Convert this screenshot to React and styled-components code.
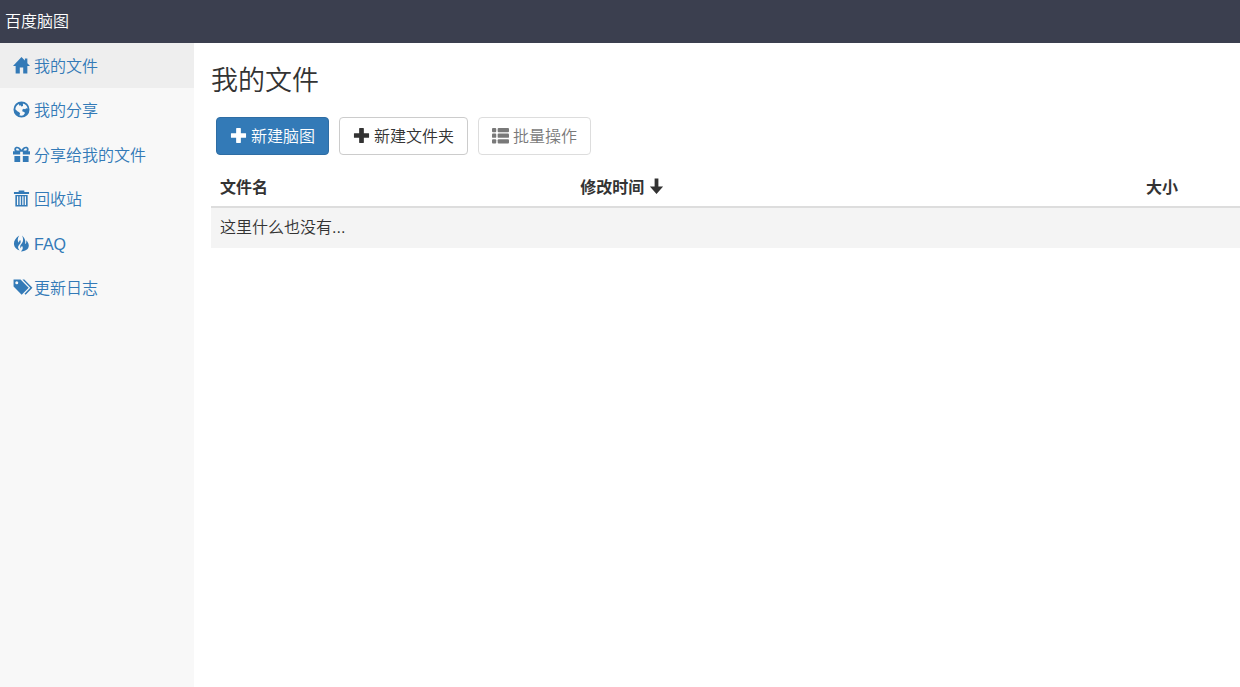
import React from "react";
import styled, { createGlobalStyle } from "styled-components";

const HomeIcon = () => (
  <Icon viewBox="0 0 18 18">
    <path d="M9 0 L0 9.6 H2.8 V17.5 H7.2 V11 H10.8 V17.5 H15.2 V9.6 H18 L15.2 6.6 V1.6 H12.6 V3.8 Z" />
  </Icon>
);

const GlobeIcon = () => (
  <Icon viewBox="0 0 18 18">
    <path
      fillRule="evenodd"
      d="M9 .5 A8.5 8.5 0 1 0 9 17.5 A8.5 8.5 0 1 0 9 .5 Z M10.5 2.6 A6.6 6.6 0 0 1 15.5 8 L14 7.6 12.8 8.8 11.4 8.2 9.8 9.2 10 11 12 11.6 12.6 13 11 15.2 A6.6 6.6 0 0 1 6.6 15.1 L7.6 13.5 6.6 11.8 4.6 10.8 2.5 8.8 A6.6 6.6 0 0 1 6.2 3.1 L6.8 5 8.2 4.4 8.6 5.8 10.6 5.4 Z"
    />
  </Icon>
);

const GiftIcon = () => (
  <Icon viewBox="0 0 18 18">
    <path
      fillRule="evenodd"
      d="M0 5.6 H2 C.6 3.2 1.8 .8 4.2 .8 C6.3 .8 7.6 2 9 4 C10.4 2 11.7 .8 13.8 .8 C16.2 .8 17.4 3.2 16 5.6 H18 V9 H10.4 V6.2 H7.6 V9 H0 Z M3.9 4.8 H7 C6.1 3.4 5.2 2.5 4.3 2.5 C3.1 2.5 3 3.8 3.9 4.8 Z M11 4.8 H14.1 C15 3.8 14.9 2.5 13.7 2.5 C12.8 2.5 11.9 3.4 11 4.8 Z"
    />
    <path d="M1.5 10.6 H7.6 V17 H1.5 Z M10.4 10.6 H16.5 V17 H10.4 Z" />
  </Icon>
);

const TrashIcon = () => (
  <Icon viewBox="0 0 18 18">
    <path
      fillRule="evenodd"
      d="M6 2 V.4 H12 V2 H17 V4.2 H1 V2 Z M2.5 5.2 H15.5 V17.5 H2.5 Z M4.2 6.5 V16 H5.5 V6.5 Z M7 6.5 V16 H8.3 V6.5 Z M9.8 6.5 V16 H11.1 V6.5 Z M12.5 6.5 V16 H13.8 V6.5 Z"
    />
  </Icon>
);

const FireIcon = () => (
  <Icon viewBox="0 0 18 18">
    <path d="M6.6 .5 C3 3 .8 6 1 9.5 C1.2 13 3.6 15 7 16.5 C4.8 13.7 5 12 6.6 10.4 C8.4 8.6 8.6 7.3 7.6 5.4 C6.8 6.3 6.2 7 6.3 8.3 C4.3 6.2 4.8 3.4 6.6 .5 Z" />
    <path d="M9.6 .5 C13 4 13.6 6.6 12.6 9.9 C14 9 14.4 7.6 14 5.6 C16.8 8.6 17.8 12 15.4 14.8 C13.6 16.6 11.2 17.4 8.4 17.4 C11 15 10.6 13.4 9.5 11.5 C9 12.6 8.4 13 8.2 14.2 C6.8 12 8 10.4 9.4 8.8 C11 7 11.2 3.8 9.6 .5 Z" />
  </Icon>
);

const TagsIcon = () => (
  <WideIcon viewBox="0 0 20 18">
    <path
      fillRule="evenodd"
      d="M0 .6 H7.4 L16 9.2 L8.6 16.8 L0 8 Z M3.4 2.4 A1.6 1.6 0 1 0 3.4 5.6 A1.6 1.6 0 1 0 3.4 2.4 Z"
    />
    <path d="M9.4 .6 H11.4 L20 9.3 L12.8 16.8 L11.6 15.6 L17.7 9.3 Z" />
  </WideIcon>
);

const PlusIcon = () => (
  <Icon viewBox="0 0 18 18">
    <path d="M7 1 H11 Q11.5 1 11.5 1.5 V6.5 H16.5 Q17 6.5 17 7 V11 Q17 11.5 16.5 11.5 H11.5 V16.5 Q11.5 17 11 17 H7 Q6.5 17 6.5 16.5 V11.5 H1.5 Q1 11.5 1 11 V7 Q1 6.5 1.5 6.5 H6.5 V1.5 Q6.5 1 7 1 Z" />
  </Icon>
);

const ListIcon = () => (
  <Icon viewBox="0 0 18 18">
    {[1, 7, 13].map((y) => (
      <React.Fragment key={y}>
        <rect x="0" y={y} width="4.5" height="4.5" rx="1" />
        <rect x="6" y={y} width="12" height="4.5" rx="1" />
      </React.Fragment>
    ))}
  </Icon>
);

const ArrowDownIcon = () => (
  <Icon viewBox="0 0 18 18">
    <path d="M7 .5 H11 V9 H16 L9 17 L2 9 H7 Z" />
  </Icon>
);

const menus = [
  { name: "我的文件", icon: <HomeIcon />, active: true },
  { name: "我的分享", icon: <GlobeIcon /> },
  { name: "分享给我的文件", icon: <GiftIcon /> },
  { name: "回收站", icon: <TrashIcon /> },
  { name: "FAQ", icon: <FireIcon /> },
  { name: "更新日志", icon: <TagsIcon /> },
];

const App = () => {
  return (
    <>
      <GlobalStyle />
      <Wrap>
        <Header>百度脑图</Header>
        <Body>
          <Sidebar>
            <MenuList>
              {menus.map((menu) => (
                <MenuItem key={menu.name}>
                  <MenuLink href="#" $active={menu.active}>
                    <IconSlot>{menu.icon}</IconSlot>
                    {menu.name}
                  </MenuLink>
                </MenuItem>
              ))}
            </MenuList>
          </Sidebar>
          <Main>
            <Title>我的文件</Title>
            <Toolbar>
              <Button type="button" $primary>
                <PlusIcon />
                新建脑图
              </Button>
              <Button type="button">
                <PlusIcon />
                新建文件夹
              </Button>
              <Button type="button" disabled>
                <ListIcon />
                批量操作
              </Button>
            </Toolbar>
            <FileTable>
              <thead>
                <tr>
                  <HeadCell $width="35%">文件名</HeadCell>
                  <HeadCell $width="55%">
                    <SortLabel>
                      修改时间
                      <ArrowDownIcon />
                    </SortLabel>
                  </HeadCell>
                  <HeadCell $width="10%">大小</HeadCell>
                </tr>
              </thead>
              <tbody>
                <tr>
                  <Cell colSpan="3">这里什么也没有...</Cell>
                </tr>
              </tbody>
            </FileTable>
          </Main>
        </Body>
      </Wrap>
    </>
  );
};

const GlobalStyle = createGlobalStyle`
  * {
    box-sizing: border-box;
  }
  body {
    margin: 0;
    background: #fff;
    color: #333;
    font-family: "Liberation Sans", "Noto Sans CJK SC", sans-serif;
    font-size: 16px;
    font-weight: 350;
    line-height: 24px;
  }
`;

const Wrap = styled.div`
  min-height: 100vh;
  display: flex;
  flex-direction: column;
`;

const Header = styled.header`
  padding: 10px 5px 9px;
  background: #3b3f4f;
  color: #fff;
`;

const Body = styled.div`
  flex: 1;
  display: flex;
`;

const Sidebar = styled.nav`
  width: 194px;
  flex-shrink: 0;
  background: #f8f8f8;
`;

const MenuList = styled.ul`
  min-height: 267px;
  margin: 0;
  padding: 0;
  display: grid;
  grid-auto-rows: 1fr;
  list-style: none;
`;

const MenuItem = styled.li`
  display: flex;
`;

const MenuLink = styled.a`
  flex: 1;
  display: flex;
  align-items: center;
  padding: 3px 13px 0;
  background: ${({ $active }) => ($active ? "#eee" : "transparent")};
  color: #337ab7;
  text-decoration: none;
`;

const IconSlot = styled.span`
  width: 21px;
  display: flex;
`;

const Icon = styled.svg`
  width: 17px;
  height: 17px;
  margin-bottom: 3px;
  flex-shrink: 0;
  fill: currentColor;
`;

const WideIcon = styled(Icon)`
  width: 20px;
`;

const Main = styled.main`
  flex: 1;
  min-width: 0;
  padding: 20px 0 0 17px;
`;

const Title = styled.h1`
  margin: 0;
  font-size: 27px;
  font-weight: 350;
  line-height: 36px;
`;

const Toolbar = styled.div`
  display: flex;
  gap: 10px;
  padding: 18px 5px 12px;
`;

const Button = styled.button`
  height: 38px;
  display: flex;
  align-items: center;
  gap: 4px;
  padding: 2px 13px 0;
  border: 1px solid ${({ $primary }) => ($primary ? "#2e6da4" : "#ccc")};
  border-radius: 4px;
  background: ${({ $primary }) => ($primary ? "#337ab7" : "#fff")};
  color: ${({ $primary }) => ($primary ? "#fff" : "#333")};
  font: inherit;
  cursor: pointer;
  &:disabled {
    opacity: 0.65;
    cursor: not-allowed;
  }
`;

const FileTable = styled.table`
  width: 100%;
  table-layout: fixed;
  border-collapse: collapse;
`;

const HeadCell = styled.th`
  width: ${({ $width }) => $width};
  padding: 9px 9px 6px;
  border-bottom: 2px solid #ddd;
  font-weight: 700;
  text-align: left;
`;

const SortLabel = styled.span`
  display: flex;
  align-items: center;
  gap: 4px;
`;

const Cell = styled.td`
  padding: 8px 9px;
  background: #f4f4f4;
`;

export default App;
